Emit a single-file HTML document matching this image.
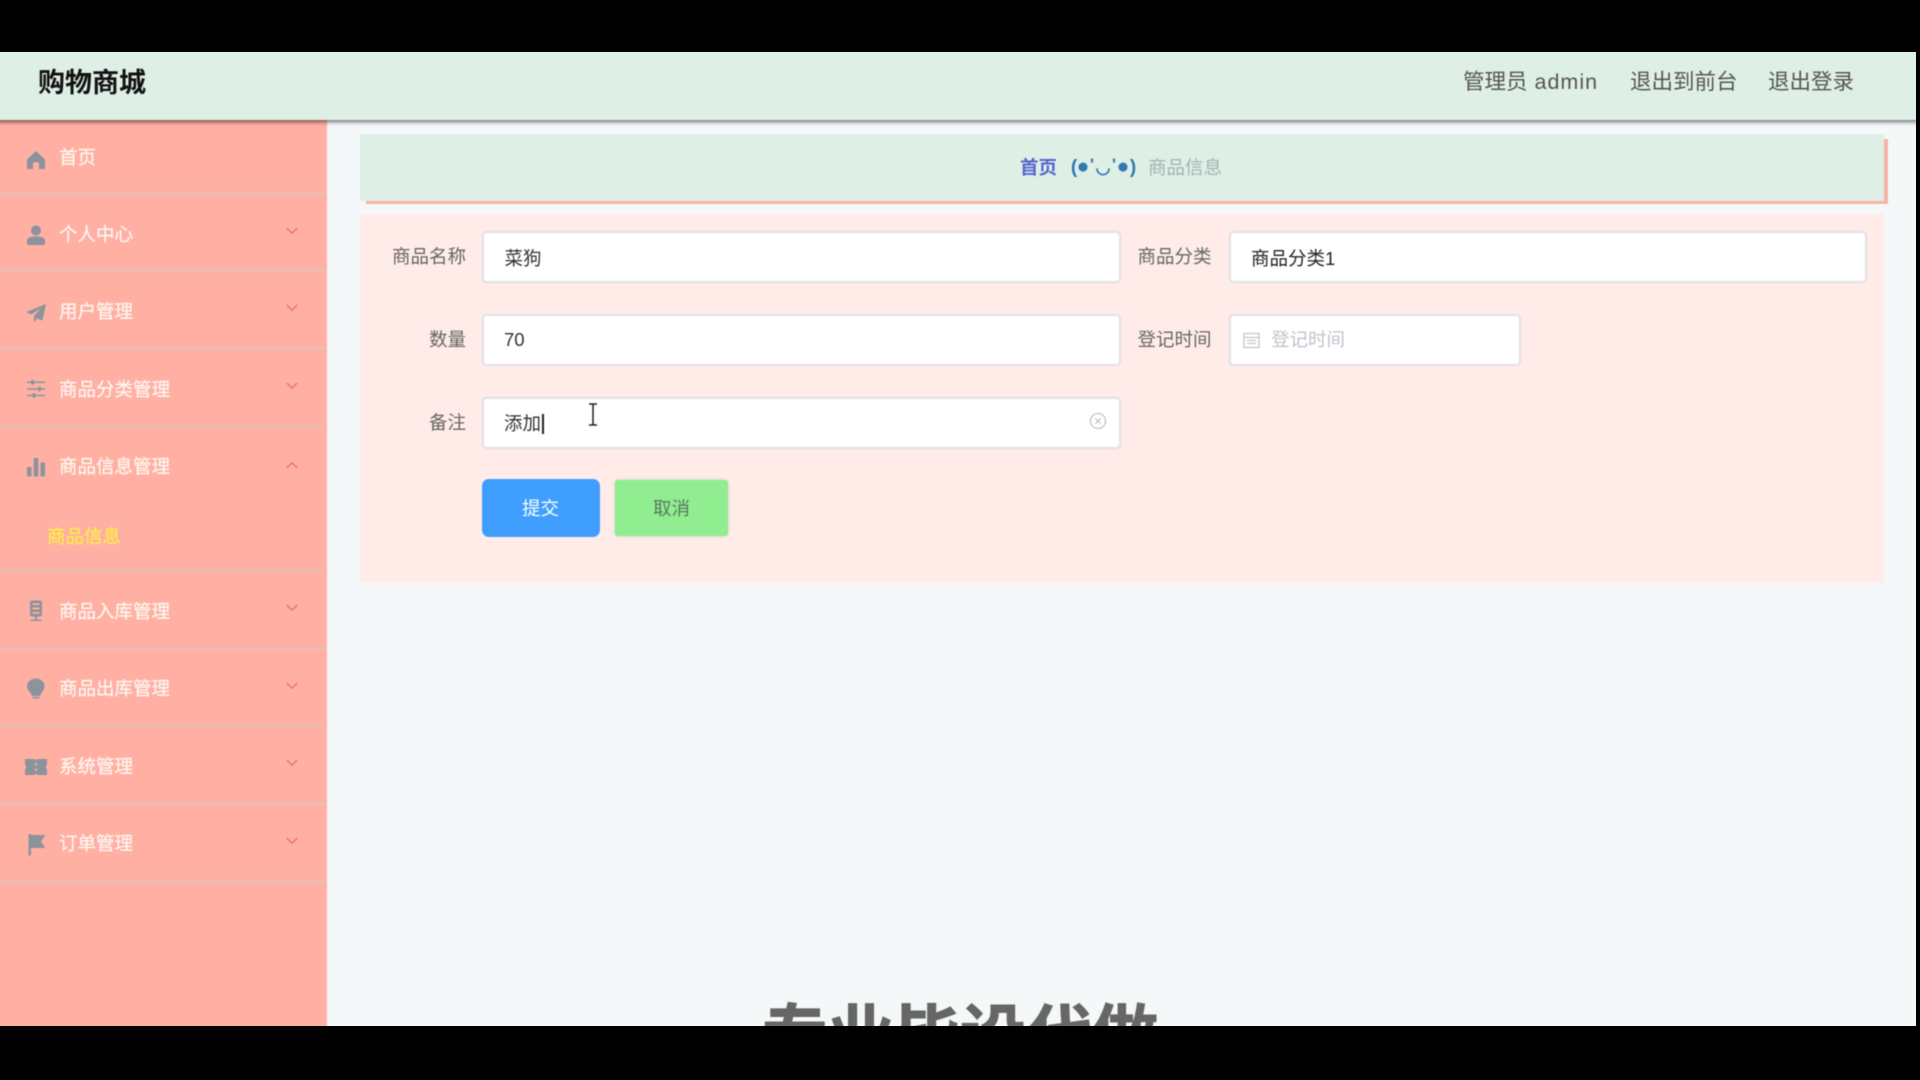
<!DOCTYPE html>
<html lang="zh-CN">
<head>
<meta charset="utf-8">
<title>购物商城</title>
<style>
html,body{margin:0;padding:0;width:1920px;height:1080px;overflow:hidden;background:#000;}
body{font-family:"Liberation Sans","Noto Sans CJK SC",sans-serif;position:relative;}
#clip{position:absolute;left:0;top:52px;width:1916px;height:974px;background:#f4f8f9;overflow:hidden;}
#app{position:absolute;left:0;top:0;width:1916px;height:974px;filter:blur(.45px);}
.a{position:absolute;white-space:nowrap;}
.t{position:absolute;white-space:nowrap;line-height:30px;height:30px;}
.bg{position:absolute;left:-12px;top:-12px;width:1950px;height:1000px;background:#f4f8f9;}
.hdr{position:absolute;left:-12px;top:-12px;width:1950px;height:80px;background:#deefe6;box-shadow:0 2px 4px rgba(0,0,0,.55);z-index:3;}
.side{position:absolute;left:-12px;top:68px;width:339px;height:920px;background:#ffb0a3;z-index:1;}
.div{position:absolute;left:-12px;width:339px;height:3px;background:#ecbbb1;}
.m{font-size:18.5px;color:#fff7f2;left:59px;-webkit-text-stroke:.2px #fff7f2;}
.lbl{font-size:18.5px;color:#666;text-align:right;}
.inp{position:absolute;box-sizing:border-box;background:#fff;border:2px solid #e3e2e7;border-radius:5px;box-shadow:0 0 1px #d5d5dc;}
.val{font-size:18.5px;color:#333;}
.ic{position:absolute;fill:#8d939c;}
.ch{position:absolute;left:286px;width:12px;height:8px;fill:none;stroke:#e9706c;stroke-width:1.3;}
.e{position:absolute;top:100px;height:30px;line-height:30px;text-align:center;color:#2f78b2;font-weight:bold;white-space:nowrap;}
</style>
</head>
<body>
<div id="clip">
<div id="app">
  <div class="bg"></div>
  <div class="hdr"></div>
  <div style="position:absolute;left:0;top:0;width:1916px;height:68px;z-index:4;">
    <div class="t" style="left:38px;top:16px;font-size:27px;font-weight:bold;color:#111;">购物商城</div>
    <div class="t" style="left:1463px;top:15px;font-size:21.5px;color:#555;">管理员<span style="letter-spacing:1px;"> admin</span></div>
    <div class="t" style="left:1630px;top:15px;font-size:21.5px;color:#555;">退出到前台</div>
    <div class="t" style="left:1768px;top:15px;font-size:21.5px;color:#555;">退出登录</div>
  </div>

  <div class="side"></div>
  <div style="position:absolute;left:0;top:0;width:327px;height:974px;z-index:2;">
    <div class="div" style="top:140px"></div>
    <div class="div" style="top:217px"></div>
    <div class="div" style="top:295px"></div>
    <div class="div" style="top:373px"></div>
    <div class="div" style="top:517px"></div>
    <div class="div" style="top:595px"></div>
    <div class="div" style="top:672px"></div>
    <div class="div" style="top:750px"></div>
    <div class="div" style="top:828px"></div>

    <div class="t m" style="top:91px">首页</div>
    <div class="t m" style="top:168px">个人中心</div>
    <div class="t m" style="top:245px">用户管理</div>
    <div class="t m" style="top:323px">商品分类管理</div>
    <div class="t m" style="top:400px">商品信息管理</div>
    <div class="t" style="left:47px;top:470px;font-size:18.5px;color:#ffee44;-webkit-text-stroke:.2px #ffee44;">商品信息</div>
    <div class="t m" style="top:545px">商品入库管理</div>
    <div class="t m" style="top:622px">商品出库管理</div>
    <div class="t m" style="top:700px">系统管理</div>
    <div class="t m" style="top:777px">订单管理</div>

    <!-- home -->
    <svg class="ic" style="left:26px;top:98px" width="20" height="20" viewBox="0 0 20 20"><path d="M10 1 L19 9.5 V19 H13 V13.5 C13 11.5 7 11.5 7 13.5 V19 H1 V9.5 Z"/></svg>
    <!-- user -->
    <svg class="ic" style="left:26px;top:173px" width="20" height="20" viewBox="0 0 20 20"><circle cx="10" cy="5.5" r="5"/><path d="M1 19 V15.5 C1 12.5 4 11.5 10 11.5 C16 11.5 19 12.5 19 15.5 V19 Q19 20 18 20 H2 Q1 20 1 19 Z"/></svg>
    <!-- plane -->
    <svg class="ic" style="left:26px;top:251px" width="20" height="20" viewBox="0 0 20 20"><path d="M20 1 L0 9 L5.5 11.5 L15 5 L8 13 L8 19.5 L11 15.5 L16.5 17.5 Z"/></svg>
    <!-- sliders -->
    <svg class="ic" style="left:26px;top:327px" width="20" height="20" viewBox="0 0 20 20"><path d="M1 2.5 H19 V4 H1 Z M1 9.2 H19 V10.7 H1 Z M1 15.8 H19 V17.3 H1 Z"/><rect x="5" y="1" width="3" height="4.6" rx="1"/><rect x="12" y="7.7" width="3" height="4.6" rx="1"/><rect x="6.5" y="14.3" width="3" height="4.6" rx="1"/></svg>
    <!-- bars -->
    <svg class="ic" style="left:26px;top:405px" width="20" height="20" viewBox="0 0 20 20"><rect x="1" y="10" width="4.5" height="9.5"/><rect x="7.7" y="1" width="4.5" height="18.5"/><rect x="14.5" y="5.5" width="4.5" height="14"/></svg>
    <!-- mic -->
    <svg class="ic" style="left:26px;top:548px" width="20" height="22" viewBox="0 0 20 22"><path d="M6 0.5 H14 Q16 0.5 16 3 V14 Q16 16.5 14 16.5 H6 Q4 16.5 4 14 V3 Q4 .5 6 .5 Z M6.5 3.2 V5 H13.5 V3.2 Z M6.5 7.5 V9.5 H13.5 V7.5 Z M6.5 12 V13.8 H13.5 V12 Z" fill-rule="evenodd"/><path d="M9 16.5 H11 V19.5 H15.5 V21 H4.5 V19.5 H9 Z"/></svg>
    <!-- bulb -->
    <svg class="ic" style="left:26px;top:626px" width="20" height="22" viewBox="0 0 20 22"><path d="M10 .5 C15 .5 18.5 4 18.5 8.5 C18.5 12 15.5 14 14 18 H6 C4.5 14 1 12 1 8.5 C1 4 5 .5 10 .5 Z"/><rect x="6.5" y="19" width="7" height="1.5"/></svg>
    <!-- ticket -->
    <svg class="ic" style="left:25px;top:705px" width="22" height="20" viewBox="0 0 22 20"><path fill-rule="evenodd" d="M0 2 H9.5 Q11 4 12.5 2 H22 V7.5 Q20 10 22 12.5 V18 H12.5 Q11 16 9.5 18 H0 V12.5 Q2 10 0 7.5 Z M10.2 6 V8.5 H11.8 V6 Z M10.2 11.5 V14 H11.8 V11.5 Z"/></svg>
    <!-- flag -->
    <svg class="ic" style="left:27px;top:782px" width="20" height="22" viewBox="0 0 20 22"><path d="M1.5 0 H4 V21.5 H1.5 Z M4 1 H18.5 L14 7.5 L18.5 14 H4 Z"/></svg>

    <svg class="ch" style="top:175px" viewBox="0 0 12 8"><path d="M.8 1 L6 6.2 L11.2 1"/></svg>
    <svg class="ch" style="top:252px" viewBox="0 0 12 8"><path d="M.8 1 L6 6.2 L11.2 1"/></svg>
    <svg class="ch" style="top:330px" viewBox="0 0 12 8"><path d="M.8 1 L6 6.2 L11.2 1"/></svg>
    <svg class="ch" style="top:409px" viewBox="0 0 12 8"><path d="M.8 7 L6 1.8 L11.2 7"/></svg>
    <svg class="ch" style="top:552px" viewBox="0 0 12 8"><path d="M.8 1 L6 6.2 L11.2 1"/></svg>
    <svg class="ch" style="top:630px" viewBox="0 0 12 8"><path d="M.8 1 L6 6.2 L11.2 1"/></svg>
    <svg class="ch" style="top:707px" viewBox="0 0 12 8"><path d="M.8 1 L6 6.2 L11.2 1"/></svg>
    <svg class="ch" style="top:785px" viewBox="0 0 12 8"><path d="M.8 1 L6 6.2 L11.2 1"/></svg>
  </div>

  <!-- breadcrumb -->
  <div class="a" style="left:360px;top:82px;width:1524px;height:67px;background:#deefe6;box-shadow:5px 4px 0 -1px #f9b3a3;"></div>
  <div class="t" style="left:1020px;top:101px;font-size:18.5px;font-weight:bold;color:#5566cc;">首页</div>
  <div class="e" style="left:1069px;width:10px;font-size:19px;top:101px;">(</div>
  <div class="e" style="left:1073px;width:20px;font-size:21px;top:100px;">●</div>
  <div class="e" style="left:1088px;width:8px;font-size:17px;top:98px;">'</div>
  <div class="e" style="left:1095px;width:16px;font-size:17px;top:101px;">◡</div>
  <div class="e" style="left:1110px;width:8px;font-size:17px;top:98px;">'</div>
  <div class="e" style="left:1113px;width:20px;font-size:21px;top:100px;">●</div>
  <div class="e" style="left:1128px;width:10px;font-size:19px;top:101px;">)</div>
  <div class="t" style="left:1148px;top:101px;font-size:18.5px;color:#a6b1b6;">商品信息</div>

  <!-- form panel -->
  <div class="a" style="left:360px;top:162px;width:1524px;height:369px;background:#ffece9;"></div>

  <div class="t lbl" style="left:392px;top:190px;">商品名称</div>
  <div class="inp" style="left:482px;top:179px;width:638.5px;height:52px;"></div>
  <div class="t val" style="left:504.5px;top:192px;">菜狗</div>

  <div class="t lbl" style="left:1137.5px;top:190px;">商品分类</div>
  <div class="inp" style="left:1229px;top:179px;width:638px;height:52px;"></div>
  <div class="t val" style="left:1251px;top:192px;color:#222;">商品分类1</div>

  <div class="t lbl" style="left:429px;top:273px;">数量</div>
  <div class="inp" style="left:482px;top:262px;width:638.5px;height:52px;"></div>
  <div class="t val" style="left:504px;top:273px;">70</div>

  <div class="t lbl" style="left:1137.5px;top:273px;">登记时间</div>
  <div class="inp" style="left:1229px;top:262px;width:292px;height:52px;"></div>
  <svg class="a" style="left:1243px;top:280px" width="17" height="17" viewBox="0 0 17 17" fill="none" stroke="#c4c6cc" stroke-width="1.3"><rect x="1" y="1.5" width="15" height="14"/><path d="M1 5.5 H16 M4 8.5 H13 M4 11.5 H13"/></svg>
  <div class="t" style="left:1271px;top:273px;font-size:18.5px;color:#c0c4cc;">登记时间</div>

  <div class="t lbl" style="left:429px;top:356px;">备注</div>
  <div class="inp" style="left:482px;top:344.5px;width:638.5px;height:52px;"></div>
  <div class="t val" style="left:504px;top:357px;">添加</div>
  <div class="a" style="left:542px;top:362px;width:1.5px;height:20px;background:#222;"></div>
  <svg class="a" style="left:1089px;top:360px" width="18" height="18" viewBox="0 0 18 18" fill="none" stroke="#c0c4cc" stroke-width="1.3"><circle cx="9" cy="9" r="7.5"/><path d="M6.3 6.3 L11.7 11.7 M11.7 6.3 L6.3 11.7"/></svg>
  <svg class="a" style="left:586px;top:351px" width="14" height="23" viewBox="0 0 14 23" fill="none" stroke="#222" stroke-width="1.5"><path d="M3 1 H6 Q7 1 7 3 V20 Q7 22 6 22 H3 M11 1 H8 Q7 1 7 3 V20 Q7 22 8 22 H11"/></svg>

  <div class="a" style="left:482px;top:427px;width:118px;height:58px;background:#409eff;border-radius:7px;"></div>
  <div class="t" style="left:522px;top:442px;font-size:18.5px;color:#fff;">提交</div>
  <div class="a" style="left:615px;top:428px;width:113px;height:56px;background:#90ee90;border-radius:3px;box-shadow:0 0 3px #c0cfb8;"></div>
  <div class="t" style="left:653px;top:442px;font-size:18.5px;color:#5c7a5f;">取消</div>

  <div class="a" style="left:762px;top:944px;font-size:66px;line-height:80px;font-weight:bold;color:#666;-webkit-text-stroke:1px #666;text-shadow:0 0 2px #fff;">专业毕设代做</div>
</div>
</div>
</body>
</html>
